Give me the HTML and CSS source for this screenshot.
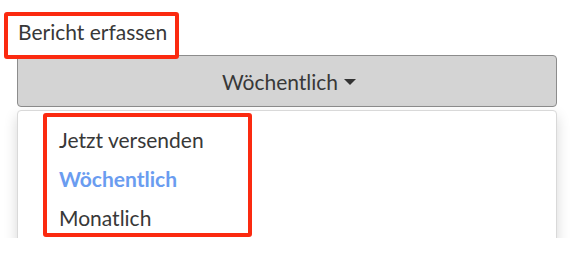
FILE: index.html
```html
<!DOCTYPE html>
<html lang="de">
<head>
    <meta charset="UTF-8">
    <title>Bericht erfassen</title>
    <link rel="stylesheet" href="styles.css">
</head>
<body>
    <div class="frame">
        <div class="field">
            <label class="field-label"><span class="mark-label">Bericht erfassen</span></label>
            <button class="dropdown-toggle" type="button">Wöchentlich<span class="caret"></span></button>
            <ul class="dropdown-menu">
                <li class="mark-wrap">
                    <span class="mark-menu"></span>
                    <a href="#">Jetzt versenden</a>
                </li>
                <li class="active"><a href="#">Wöchentlich</a></li>
                <li><a href="#">Monatlich</a></li>
            </ul>
        </div>
    </div>
</body>
</html>
```

FILE: styles.css
```css
* {
    margin: 0;
    padding: 0;
    box-sizing: border-box;
}
body {
    background-color: #fff;
    font-family: Lato, "Open Sans", sans-serif;
    color: #383838;
}
.frame {
    height: 238px;
    overflow: hidden;
}
.field {
    width: 540px;
    margin-left: 17px;
    padding-top: 20px;
}
.field-label {
    display: block;
    font-size: 21px;
    line-height: 24px;
    height: 35px;
    padding-left: 1px;
}
.mark-label {
    position: relative;
}
.mark-label::before {
    content: "";
    position: absolute;
    z-index: 2;
    left: -14px;
    top: -7px;
    box-sizing: border-box;
    width: 175px;
    height: 47px;
    border: 4.5px solid #fb2a10;
    border-radius: 3px;
}
.dropdown-toggle {
    display: flex;
    align-items: center;
    justify-content: center;
    width: 100%;
    height: 52px;
    background-color: #d4d4d4;
    border: 1px solid #8c8c8c;
    border-radius: 4px;
    font-family: inherit;
    font-size: 21px;
    color: #383838;
    padding-left: 4px;
}
.caret {
    display: inline-block;
    margin-left: 6px;
    margin-top: 2px;
    border-top: 6px solid #333;
    border-left: 6px solid transparent;
    border-right: 6px solid transparent;
}
.dropdown-menu {
    list-style: none;
    margin-top: 3px;
    padding: 9px 0 20px;
    background-color: #fff;
    border: 1px solid #d9d9d9;
    border-radius: 4px;
    box-shadow: 0 6px 14px rgba(0, 0, 0, 0.16);
}
.dropdown-menu a {
    display: block;
    padding-left: 41px;
    font-size: 21px;
    line-height: 39px;
    color: #383838;
    text-decoration: none;
}
.dropdown-menu .active a {
    color: #6a9cf0;
    font-weight: bold;
}
.mark-wrap {
    position: relative;
}
.mark-menu {
    position: absolute;
    z-index: 2;
    left: 25px;
    top: -7px;
    width: 209px;
    height: 124px;
    border: 4.5px solid #fb2a10;
    border-radius: 3px;
}
```
